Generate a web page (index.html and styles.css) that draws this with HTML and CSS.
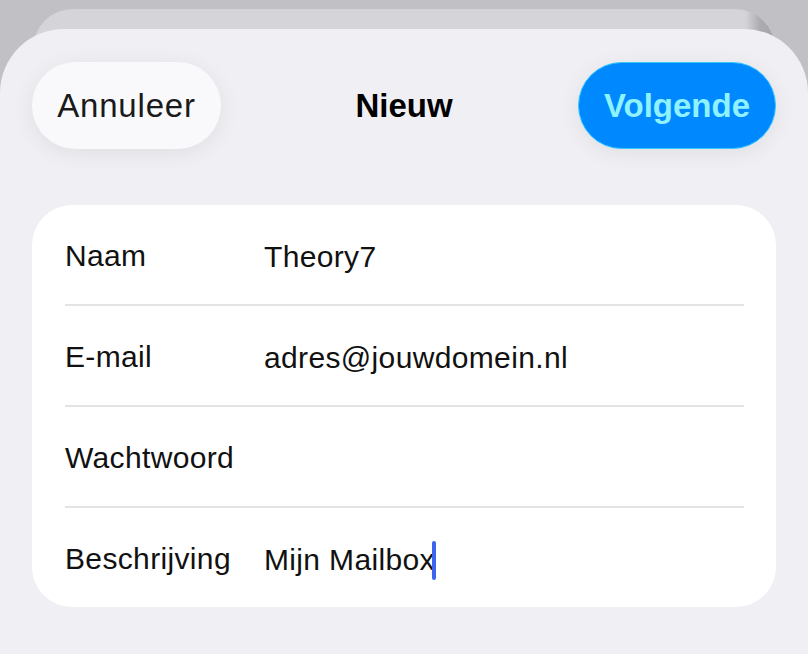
FILE: index.html
```html
<!DOCTYPE html>
<html lang="nl">
<head>
  <meta charset="UTF-8" />
  <meta name="viewport" content="width=device-width, initial-scale=1.0"/>
  <title>Nieuw account</title>
  <link rel="stylesheet" href="styles.css">
</head>
<body>
  <div class="back-sheet"></div>

  <div class="sheet">
    <div class="topbar">
      <button class="pill-btn cancel">Annuleer</button>
      <h1>Nieuw</h1>
      <button class="pill-btn next">Volgende</button>
    </div>

    <div class="form-card">
      <div class="row">
        <span class="label">Naam</span>
        <span class="value">Theory7</span>
      </div>
      <div class="row">
        <span class="label">E-mail</span>
        <span class="value">adres@jouwdomein.nl</span>
      </div>
      <div class="row">
        <span class="label">Wachtwoord</span>
        <span class="value"></span>
      </div>
      <div class="row">
        <span class="label">Beschrijving</span>
        <span class="value">Mijn Mailbox<span class="caret"></span></span>
      </div>
    </div>
  </div>
</body>
</html>
```

FILE: styles.css
```css
* {
  margin: 0;
  padding: 0;
  box-sizing: border-box;
}
body {
  font-family: 'Liberation Sans', Arial, sans-serif;
  background: #c1c0c5;
  color: #111;
  height: 654px;
  overflow: hidden;
  padding-top: 9px;
}
.back-sheet {
  height: 40px;
  margin: 0 33px;
  border-radius: 42px 42px 0 0;
  background: linear-gradient(to right, #d5d5d9 0%, #d5d5d9 96%, #acabb0 98%, #a6a5aa 100%);
}
.sheet {
  margin-top: -20px;
  height: 640px;
  background: #efeff4;
  border-radius: 64px 64px 0 0;
  padding: 33px 32px 0;
}
.topbar {
  display: flex;
  align-items: center;
  justify-content: space-between;
  height: 87px;
}
h1 {
  font-size: 33px;
  font-weight: bold;
  color: #000;
  margin-left: 9px;
}
.pill-btn {
  height: 87px;
  border-radius: 44px;
  font-family: 'Liberation Sans', Arial, sans-serif;
  font-size: 33px;
  border: none;
  box-shadow: 0 4px 22px rgba(0, 0, 0, 0.07);
}
.cancel {
  width: 189px;
  background: #f9f9fc;
  color: #1a1a1a;
  letter-spacing: 0.8px;
}
.next {
  width: 198px;
  background: #0088ff;
  color: #8ef3ff;
  font-weight: bold;
  border: 1.5px solid #35c8ff;
}
.form-card {
  margin-top: 56px;
  background: #fff;
  border-radius: 40px;
  padding: 0 32px 0 33px;
}
.row {
  display: flex;
  align-items: center;
  height: 101px;
  padding-top: 2px;
  border-bottom: 2px solid #e4e4e7;
  font-size: 30px;
  letter-spacing: 0.35px;
}
.row:last-child {
  border-bottom: none;
  height: 99px;
}
.label {
  width: 199px;
  flex-shrink: 0;
}
.value {
  display: flex;
  align-items: center;
  padding-top: 3px;
}
.caret {
  display: inline-block;
  width: 4px;
  height: 39px;
  margin-left: -3px;
  border-radius: 2px;
  background: #3d66ee;
}
```
